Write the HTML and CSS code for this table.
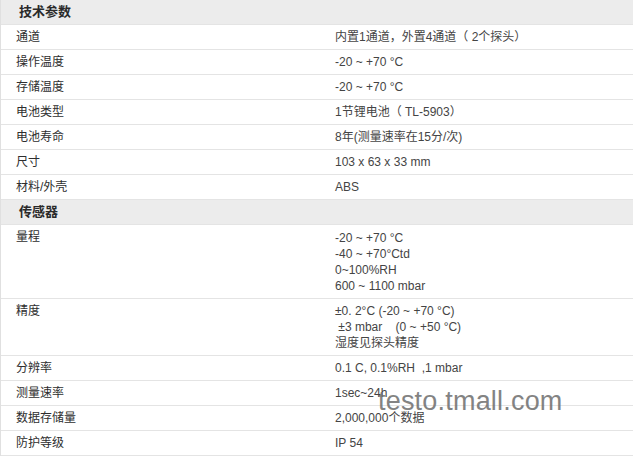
FILE: index.html
```html
<!DOCTYPE html>
<html lang="zh">
<head>
<meta charset="utf-8">
<title>技术参数</title>
<link rel="stylesheet" href="styles.css">
</head>
<body>
<div class="spec">
  <div class="head">技术参数</div>
  <div class="row"><div class="k">通道</div><div class="v">内置1通道，外置4通道（ 2个探头）</div></div>
  <div class="row"><div class="k">操作温度</div><div class="v">-20 ~ +70 °C</div></div>
  <div class="row"><div class="k">存储温度</div><div class="v">-20 ~ +70 °C</div></div>
  <div class="row"><div class="k">电池类型</div><div class="v">1节锂电池（ TL-5903）</div></div>
  <div class="row"><div class="k">电池寿命</div><div class="v">8年(测量速率在15分/次)</div></div>
  <div class="row"><div class="k">尺寸</div><div class="v">103 x 63 x 33 mm</div></div>
  <div class="row"><div class="k">材料/外壳</div><div class="v">ABS</div></div>
  <div class="head">传感器</div>
  <div class="row tall"><div class="k">量程</div><div class="v">-20 ~ +70 °C<br>-40 ~ +70°Ctd<br>0~100%RH<br>600 ~ 1100 mbar</div></div>
  <div class="row"><div class="k">精度</div><div class="v pre">±0. 2°C (-20 ~ +70 °C)
 ±3 mbar    (0 ~ +50 °C)
湿度见探头精度</div></div>
  <div class="row"><div class="k">分辨率</div><div class="v pre">0.1 C, 0.1%RH  ,1 mbar</div></div>
  <div class="row"><div class="k">测量速率</div><div class="v">1sec~24h</div></div>
  <div class="row"><div class="k">数据存储量</div><div class="v">2,000,000个数据</div></div>
  <div class="row"><div class="k">防护等级</div><div class="v">IP 54</div></div>
</div>
<div class="watermark">testo.tmall.com</div>
</body>
</html>
```
FILE: styles.css
```css
html, body {
  margin: 0;
  padding: 0;
  background: #ffffff;
}
body {
  position: relative;
  width: 633px;
  height: 456px;
  overflow: hidden;
  font-family: "Liberation Sans", "Noto Sans CJK SC", sans-serif;
  font-size: 12px;
  color: #333333;
}
.spec {
  border-left: 1px solid #e0e0e0;
}
.head {
  background: #ececec;
  font-weight: bold;
  font-size: 13px;
  line-height: 16px;
  padding: 4px 18px;
  border-bottom: 1px solid #e4e4e4;
  color: #2a2a2a;
}
.row {
  display: grid;
  grid-template-columns: 318px 1fr;
  border-bottom: 1px solid #e4e4e4;
  line-height: 16px;
}
.k {
  padding: 4px 15px;
  color: #2e2e2e;
}
.v {
  padding: 4px 16px;
  color: #444444;
}
.tall .v {
  padding-top: 5px;
}
.pre {
  white-space: pre;
}
.watermark {
  position: absolute;
  left: 378px;
  top: 388px;
  font-family: "Liberation Sans", sans-serif;
  font-size: 27px;
  line-height: 27px;
  color: #6e6e6e;
  opacity: 0.85;
  letter-spacing: 0.2px;
}
```
